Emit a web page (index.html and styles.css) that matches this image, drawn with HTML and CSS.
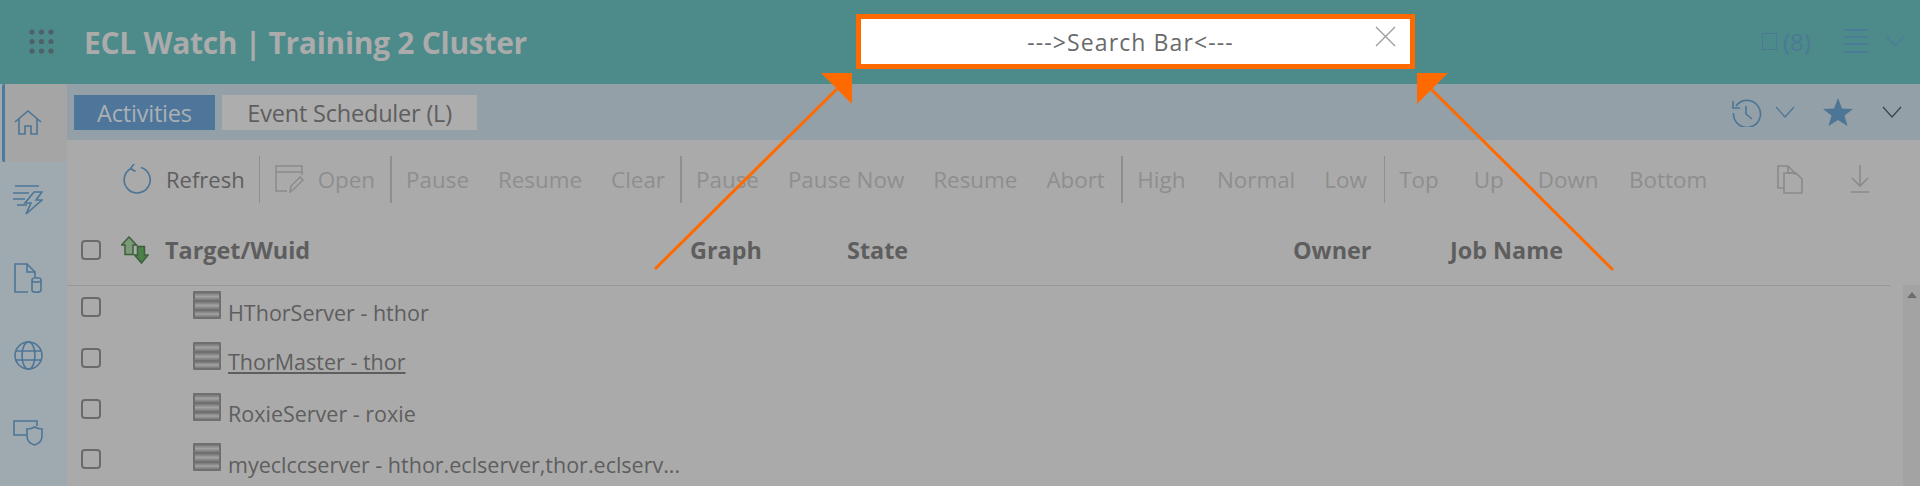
FILE: index.html
```html
<!DOCTYPE html>
<html lang="en">

<head>
    <meta charset="UTF-8">
    <title>ECL Watch</title>
    <link rel="stylesheet" href="styles.css">
</head>

<body>
    <svg width="0" height="0" class="defs">
        <linearGradient id="bar" x1="0" y1="0" x2="0" y2="1">
            <stop offset="0" stop-color="#777" />
            <stop offset="0.5" stop-color="#a2a2a2" />
            <stop offset="1" stop-color="#7a7a7a" />
        </linearGradient>
        <symbol id="server" viewBox="0 0 28 28">
            <rect x="0" y="0" width="28" height="28" rx="1" fill="#6f6f6f" />
            <rect x="2" y="2" width="24" height="7" fill="url(#bar)" />
            <rect x="2" y="11" width="24" height="7" fill="url(#bar)" />
            <rect x="2" y="20" width="24" height="6" fill="url(#bar)" />
        </symbol>
    </svg>

    <header class="topbar">
        <svg class="waffle" width="25" height="25" viewBox="0 0 25 25" fill="#4f6068">
            <circle cx="3" cy="3" r="2.6" /><circle cx="12.5" cy="3" r="2.6" /><circle cx="22" cy="3" r="2.6" />
            <circle cx="3" cy="12.5" r="2.6" /><circle cx="12.5" cy="12.5" r="2.6" /><circle cx="22" cy="12.5" r="2.6" />
            <circle cx="3" cy="22" r="2.6" /><circle cx="12.5" cy="22" r="2.6" /><circle cx="22" cy="22" r="2.6" />
        </svg>
        <div class="title">ECL Watch | Training 2 Cluster</div>
        <div class="top-right">
            <span class="tofu"></span>
            <span class="count">(8)</span>
            <svg class="burger" width="24" height="24" viewBox="0 0 24 24" stroke="#4c7896" stroke-width="1.6">
                <path d="M0 1h24M0 8h24M0 15h24M0 23h24" />
            </svg>
            <svg class="chev" width="20" height="12" viewBox="0 0 20 12" fill="none" stroke="#4c7d98" stroke-width="1.2">
                <path d="M1 1l9 10 9-10" />
            </svg>
        </div>
    </header>

    <div class="main">
        <nav class="sidenav">
            <div class="nav-item active">
                <svg width="28" height="26" viewBox="0 0 28 26" fill="none" stroke="#4c7596" stroke-width="1.6">
                    <path d="M1 12L14 1l13 11M5 9v15h6v-8h6v8h6V9" />
                </svg>
            </div>
            <div class="nav-item">
                <svg width="30" height="30" viewBox="0 0 30 30" fill="none" stroke="#4c7596" stroke-width="1.6">
                    <path d="M2 1h24M0 8h16M0 14h12M4 20h10M21 7h8l-6 8h6L13 29l5-11h-6z" />
                </svg>
            </div>
            <div class="nav-item">
                <svg width="28" height="30" viewBox="0 0 28 30" fill="none" stroke="#4c7596" stroke-width="1.6">
                    <path d="M14 29H1V1h12l8 8v5M13 1v8h8" />
                    <path d="M18 17c0-3 9-3 9 0v10c0 3-9 3-9 0zM18 17c0 3 9 3 9 0" />
                </svg>
            </div>
            <div class="nav-item">
                <svg width="29" height="29" viewBox="0 0 29 29" fill="none" stroke="#4c7596" stroke-width="1.6">
                    <circle cx="14.5" cy="14.5" r="13.5" />
                    <ellipse cx="14.5" cy="14.5" rx="6.5" ry="13.5" />
                    <path d="M2 10h25M2 19h25" />
                </svg>
            </div>
            <div class="nav-item">
                <svg width="30" height="26" viewBox="0 0 30 26" fill="none" stroke="#4c7596" stroke-width="1.6">
                    <path d="M13 15H1V1h23v5" />
                    <path d="M14 9c4 0 6-1 7.500-2 2 1 4 2 7.500 2v7c0 5-4 8-7.500 9-3.500-1-7.500-4-7.500-9z" />
                </svg>
            </div>
        </nav>

        <div class="content">
            <div class="tabbar">
                <div class="tab selected">Activities</div>
                <div class="tab">Event Scheduler (L)</div>
                <div class="tab-tools">
                    <svg class="history" width="30" height="30" viewBox="0 0 30 30" fill="none" stroke="#4c7596" stroke-width="1.6">
                        <path d="M4 9a13.500 13.500 0 1 1-2.500 7" />
                        <path d="M1 4v7h7M14 9v8l6 5" />
                    </svg>
                    <svg class="chev hist-chev" width="20" height="12" viewBox="0 0 20 12" fill="none" stroke="#4c7596" stroke-width="1.2">
                        <path d="M1 1l9 10 9-10" />
                    </svg>
                    <svg class="star" width="30" height="28" viewBox="0 0 30 28" fill="#4c7596">
                        <path d="M15 0l4 10.500 11 .5-8.500 6.500L24.500 28 15 22l-9.500 6 3-10.500L0 11l11-.5z" />
                    </svg>
                    <svg class="chev dark-chev" width="20" height="12" viewBox="0 0 20 12" fill="none" stroke="#3f4448" stroke-width="1.2">
                        <path d="M1 1l9 10 9-10" />
                    </svg>
                </div>
            </div>

            <div class="toolbar">
                <button class="tool first">
                    <svg width="30" height="30" viewBox="0 0 30 30" fill="none" stroke="#4c7596" stroke-width="1.6">
                        <path d="M9 4.500a13 13 0 1 0 10-1M12 0L8.500 4.500l5 3" />
                    </svg>
                    Refresh
                </button>
                <span class="sep thin"></span>
                <button class="tool off">
                    <svg width="29" height="28" viewBox="0 0 29 28" fill="none" stroke="#8a8a8a" stroke-width="1.5">
                        <path d="M12 26H1V1h26v9M1 7h26" />
                        <path d="M15 27l1-6 9-9 3 3-9 9z" />
                    </svg>
                    Open
                </button>
                <span class="sep"></span>
                <button class="tool off">Pause</button>
                <button class="tool off">Resume</button>
                <button class="tool off">Clear</button>
                <span class="sep"></span>
                <button class="tool off">Pause</button>
                <button class="tool off">Pause Now</button>
                <button class="tool off">Resume</button>
                <button class="tool off more-1">Abort</button>
                <span class="sep"></span>
                <button class="tool off more-2">High</button>
                <button class="tool off">Normal</button>
                <button class="tool off more-2">Low</button>
                <span class="sep thin"></span>
                <button class="tool off more-6">Top</button>
                <button class="tool off more-5">Up</button>
                <button class="tool off more-1">Down</button>
                <button class="tool off">Bottom</button>
                <div class="tool-right">
                    <svg width="26" height="29" viewBox="0 0 26 29" fill="none" stroke="#8a8a8a" stroke-width="1.6">
                        <path d="M7 23H1V1h10l7 7v2M11 1v7h7" />
                        <path d="M7 8v20h18V14l-6-6z" />
                    </svg>
                    <svg width="18" height="28" viewBox="0 0 18 28" fill="none" stroke="#8a8a8a" stroke-width="1.6">
                        <path d="M9 0v21M1 13l8 8 8-8M0 27h18" />
                    </svg>
                </div>
            </div>

            <div class="grid-head">
                <span class="check"></span>
                <svg class="sort" width="28" height="28" viewBox="0 0 28 28" stroke="#3f5f3c" stroke-width="1.5">
                    <path fill="#7c9a78" d="M8 1l7.500 8H12v9.500H4V9H.5z" />
                    <path fill="#4a8148" d="M16.500 10.500h7V19H27l-6.500 8-7-8h3z" />
                </svg>
                <span class="col-wuid">Target/Wuid</span>
                <span class="col-graph">Graph</span>
                <span class="col-state">State</span>
                <span class="col-owner">Owner</span>
                <span>Job Name</span>
            </div>

            <div class="rows">
                <div class="row">
                    <span class="check"></span>
                    <svg class="srv" width="28" height="28"><use href="#server" /></svg>
                    <span class="name">HThorServer - hthor</span>
                </div>
                <div class="row">
                    <span class="check"></span>
                    <svg class="srv" width="28" height="28"><use href="#server" /></svg>
                    <a class="name link">ThorMaster - thor</a>
                </div>
                <div class="row">
                    <span class="check"></span>
                    <svg class="srv" width="28" height="28"><use href="#server" /></svg>
                    <span class="name">RoxieServer - roxie</span>
                </div>
                <div class="row">
                    <span class="check"></span>
                    <svg class="srv" width="28" height="28"><use href="#server" /></svg>
                    <span class="name">myeclccserver - hthor.eclserver,thor.eclserv...</span>
                </div>
            </div>
            <div class="scrollbar"><span class="scroll-up"></span></div>
        </div>
    </div>

    <!-- the annotation on top of the screenshot -->
    <div class="searchbox">
        <span>---&gt;Search Bar&lt;---</span>
        <svg class="close" width="21" height="21" viewBox="0 0 21 21" stroke="#9a9a9a" stroke-width="1.2">
            <path d="M1 1l19 19M20 1L1 20" />
        </svg>
    </div>
    <svg class="arrows" width="1920" height="486" viewBox="0 0 1920 486" fill="#ff6a00" stroke="none">
        <path d="M655 269L838 88" stroke="#ff6a00" stroke-width="3" />
        <path d="M821 73h31v31z" />
        <path d="M1613 270L1430 88" stroke="#ff6a00" stroke-width="3" />
        <path d="M1417 73h31l-31 31z" />
    </svg>
</body>

</html>
```

FILE: styles.css
```css
* {
    box-sizing: border-box;
}

html,
body {
    margin: 0;
    height: 486px;
    overflow: hidden;
}

body {
    background-color: #aaaaaa;
    color: #5e5e5e;
    font-family: "Open Sans", "Noto Sans", sans-serif;
    font-size: 22px;
}

.defs {
    position: absolute;
}

.topbar {
    display: flex;
    align-items: center;
    height: 84px;
    background-color: #4d8a8a;
    padding-left: 29px;
}

.waffle {
    margin-top: -1px;
}

.title {
    margin-left: 30px;
    color: #ababab;
    font-size: 30px;
    font-weight: 700;
    letter-spacing: -0.3px;
}

.top-right {
    display: flex;
    align-items: center;
    margin-left: auto;
    margin-top: -2px;
    padding-right: 15px;
    color: #4c7896;
}

.tofu {
    width: 15px;
    height: 17px;
    border: 1px solid #4c7896;
}

.count {
    margin-left: 6px;
    font-size: 24px;
    width: 61px;
}

.burger {
    margin-right: 17px;
}

.main {
    display: flex;
    height: 402px;
}

.sidenav {
    width: 67px;
    background-color: #9eaab0;
    flex-shrink: 0;
}

.nav-item {
    display: flex;
    align-items: center;
    justify-content: center;
    height: 77.5px;
    padding-right: 11px;
}

.nav-item.active {
    background-color: #a5a5a5;
    border-radius: 2px;
    border-left: 3px solid #4e7a9e;
    margin-left: 2px;
    padding-right: 16px;
}

.content {
    position: relative;
    flex: 1;
    min-width: 0;
}

.tabbar {
    display: flex;
    align-items: center;
    height: 56px;
    background-color: #93a0a8;
    padding-left: 7px;
}

.tab {
    display: flex;
    align-items: center;
    height: 35px;
    margin-top: 1px;
    margin-right: 7px;
    padding: 0 25.5px;
    background-color: #adadad;
    color: #5e5e5e;
    font-size: 23.5px;
    letter-spacing: -0.2px;
}

.tab.selected {
    background-color: #4e769b;
    color: #abb0b4;
    padding: 0 23px;
}

.tab-tools {
    display: flex;
    align-items: center;
    margin-left: auto;
    padding-right: 18px;
}

.hist-chev {
    margin-left: 13px;
}

.star {
    margin-left: 28px;
}

.dark-chev {
    margin-left: 29px;
}

.toolbar {
    display: flex;
    align-items: center;
    height: 62px;
    margin-top: 8px;
    padding-left: 55px;
}

.tool {
    display: flex;
    align-items: center;
    gap: 14px;
    padding: 0 14.5px;
    border: 0;
    background: none;
    color: #5e5e5e;
    font: inherit;
    white-space: nowrap;
}

.tool.first {
    padding-left: 0;
}

.tool.off {
    color: #8e8e8e;
    font-size: 22.4px;
}

.tool.more-1 {
    margin-right: 1.5px;
}

.tool.more-2 {
    margin-right: 2.5px;
}

.tool.more-5 {
    margin-right: 5px;
}

.tool.more-6 {
    margin-right: 6px;
}

.sep {
    width: 2px;
    height: 47px;
    background-color: #8e8e8e;
}

.sep.thin {
    width: 1px;
}

.tool-right {
    display: flex;
    align-items: center;
    gap: 48px;
    margin-left: auto;
    padding-right: 51px;
}

.check {
    display: block;
    width: 20px;
    height: 20px;
    border: 2px solid #6a6a6a;
    border-radius: 4px;
    flex-shrink: 0;
}

.grid-head {
    display: flex;
    align-items: center;
    height: 76px;
    margin-right: 30px;
    padding-left: 14px;
    padding-top: 5px;
    border-bottom: 1px solid #989898;
    font-size: 23.4px;
    font-weight: 700;
}

.sort {
    margin-left: 20px;
}

.col-wuid {
    margin-left: 16px;
    width: 525px;
}

.col-graph {
    width: 157px;
}

.col-state {
    width: 446px;
}

.col-owner {
    width: 157px;
}

.rows {
    margin-right: 30px;
}

.row {
    display: flex;
    align-items: center;
    height: 50.7px;
    padding-left: 14px;
}

.row .check {
    margin-top: -8px;
}

.srv {
    margin-left: 92px;
    margin-top: -12px;
}

.name {
    margin-left: 7px;
    margin-top: 2px;
    font-size: 21.5px;
}

.link {
    margin-top: -2px;
    text-decoration: underline;
}

.scrollbar {
    position: absolute;
    right: 0;
    top: 201px;
    bottom: 0;
    width: 17px;
    background-color: #a3a3a3;
}

.scroll-up {
    display: block;
    width: 0;
    margin: 7px auto 0;
    border: 5px solid transparent;
    border-top: 0;
    border-bottom: 6px solid #6e6e6e;
}

.searchbox {
    position: absolute;
    left: 856px;
    top: 14px;
    display: flex;
    align-items: center;
    justify-content: center;
    width: 559px;
    height: 55px;
    padding-right: 10px;
    border: 5px solid #ff6a00;
    background-color: #fff;
    color: #6a6a6a;
    font-size: 23px;
    letter-spacing: 1.1px;
}

.close {
    position: absolute;
    right: 14px;
    top: 7px;
}

.arrows {
    position: absolute;
    left: 0;
    top: 0;
    pointer-events: none;
}
```
